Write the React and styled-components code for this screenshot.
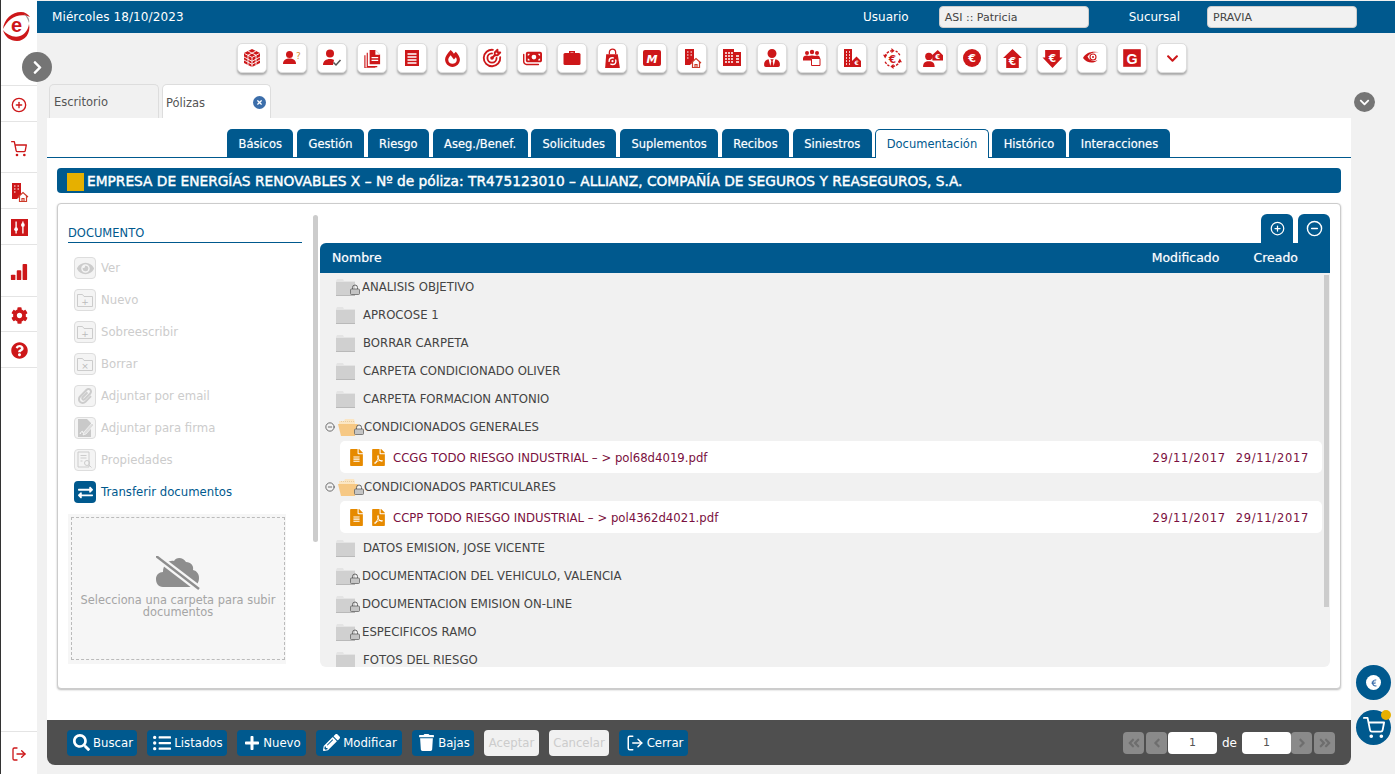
import styled, { createGlobalStyle } from 'styled-components'
import {
  FaFireAlt, FaUserTie, FaSearch, FaListUl, FaPlus, FaPencilAlt, FaTrash, FaCog, FaQuestionCircle,
  FaEuroSign, FaChevronDown, FaChevronRight, FaAngleDoubleLeft, FaAngleDoubleRight, FaAngleLeft, FaAngleRight,
  FaExchangeAlt, FaEye, FaPaperclip, FaFileAlt, FaFilePdf, FaTimes,
} from 'react-icons/fa'
import { FaMoneyBills } from 'react-icons/fa6'
import { TbTargetArrow } from 'react-icons/tb'
import { FiPlusCircle, FiMinusCircle, FiShoppingCart, FiLogOut } from 'react-icons/fi'

const BLUE = '#00598e'
const RED = '#cd1719'

const GlobalStyle = createGlobalStyle`
  html, body { margin: 0; height: 100%; overflow: hidden; }
  body { background: #f1f1f1; font-family: "DejaVu Sans", "Liberation Sans", sans-serif; font-size: 12px; color: #444; }
  * { box-sizing: border-box; }
`

/* ---- iconos dibujados a mano ---- */
const Svg = ({ size = 20, children }) => (
  <svg width={size} height={size} viewBox="0 0 20 20" fill="currentColor">{children}</svg>
)
const CubeIcon = () => (
  <Svg size={20}>
    <path d="M10 1l8 4v10l-8 4-8-4V5z" />
    <path d="M2.500 5.500L10 9.400l7.500-3.900M10 9.400V19M2 9l8 4.300L18 9M2 12l8 4.300 8-4.300M6 3l8 4.200M14 3L6 7.200M6 7.200V17M14 7.200V17" stroke="#fff" strokeWidth="0.900" fill="none" />
  </Svg>
)
const PersonAskIcon = () => (
  <Svg size={20}>
    <circle cx="7.500" cy="6.500" r="3.500" />
    <path d="M1 16c0-4 3-5.500 6.500-5.500S14 12 14 16z" />
    <text x="14" y="11" fontSize="9" fontFamily="DejaVu Sans" fill="#d8912a">?</text>
  </Svg>
)
const PersonCheckIcon = () => (
  <Svg size={20}>
    <circle cx="8" cy="5.500" r="4" />
    <path d="M1 17c0-4 3-6 7-6 1.500 0 3 .3 4 1l-1 5z" />
    <path d="M11.500 14.500l2.500 2.500 4.500-5" stroke="#555" strokeWidth="1.500" fill="none" />
  </Svg>
)
const DocsIcon = () => (
  <Svg size={19}>
    <path d="M7 1h6l5 5v10H7z" />
    <path d="M13 1v5h5" fill="#fff" />
    <path d="M9 9h7M9 12h7" stroke="#fff" strokeWidth="1.400" />
    <path d="M4.500 4v14.500H15M2 6.500V20h11" stroke="currentColor" strokeWidth="1.200" fill="none" />
  </Svg>
)
const ReceiptIcon = () => (
  <Svg size={20}>
    <path d="M3 2h14v16H3z" />
    <path d="M5.500 6h9M5.500 9h9M5.500 12h9M5.500 15h9" stroke="#fff" strokeWidth="1.500" />
  </Svg>
)
const CaseIcon = () => (
  <Svg size={20}>
    <path d="M7 5V3h6v2h-1.500V4.500h-3V5z" />
    <rect x="1.500" y="5" width="17" height="12" rx="1.500" />
  </Svg>
)
const BagIcon = () => (
  <Svg size={21}>
    <path d="M7 6V4a3 3 0 0 1 6 0v2" stroke="currentColor" strokeWidth="1.200" fill="none" />
    <path d="M4 6h11l2 13H3z" />
    <circle cx="10" cy="12.500" r="3.200" fill="none" stroke="#fff" strokeWidth="1.300" strokeDasharray="7 2" />
    <circle cx="10" cy="12.500" r="1" fill="#fff" />
  </Svg>
)
const MLogoIcon = () => (
  <Svg size={20}>
    <rect x="1" y="2" width="18" height="16" rx="2" />
    <text x="10" y="15" fontSize="11" fontWeight="700" fontStyle="italic" textAnchor="middle" fontFamily="DejaVu Sans" fill="#fff">M</text>
  </Svg>
)
const BuildingHomeIcon = () => (
  <Svg size={20}>
    <path d="M3 1h9v12l-4 4H3z" />
    <path d="M5 4h1.500M8.500 4H10M5 7h1.500M8.500 7H10M5 10h1.500" stroke="#fff" strokeWidth="1.200" />
    <path d="M9 15l5-4.500 5 4.500M10.500 14v5.500h7V14M13 19.500v-3h2v3" stroke="#cd3b2a" strokeWidth="1.200" fill="#fff" />
  </Svg>
)
const BuildingIcon = () => (
  <Svg size={20}>
    <path d="M1 1h11v3h7v14H1z" />
    <path d="M3 5h2M6 5h2M9 5h2M3 8h2M6 8h2M9 8h2M3 11h2M6 11h2M9 11h2M3 14h2M6 14h2M9 14h2M14 8h3M14 11h3M14 14h3" stroke="#fff" strokeWidth="1.500" />
  </Svg>
)
const GroupBoxIcon = () => (
  <Svg size={20}>
    <circle cx="5" cy="5" r="2" /><circle cx="10" cy="4" r="2.200" /><circle cx="15" cy="5" r="2" />
    <path d="M1 11c0-3 2-3.500 4-3.500 1 0 1.500.2 2 .5 1-.7 5-.7 6 0 .5-.3 1-.5 2-.5 2 0 3 1 3 3H9v2H1z" />
    <path d="M9.500 10.500h8.500v7H9.500z" fill="#fff" stroke="currentColor" strokeWidth="1" />
  </Svg>
)
const BuildingEuroIcon = () => (
  <Svg size={20}>
    <path d="M2 1h8v18H2z" />
    <path d="M4 4h1M7 4h1M4 7h1M7 7h1M4 10h1M7 10h1M4 13h1M7 13h1M4 16h1M7 16h1" stroke="#fff" strokeWidth="1.500" />
    <path d="M10 13l4.500-4.500L19 13v6h-9z" />
    <text x="14.500" y="17" fontSize="6" fontWeight="700" textAnchor="middle" fontFamily="DejaVu Sans" fill="#fff">€</text>
  </Svg>
)
const EuroCycleIcon = () => (
  <Svg size={21}>
    <path d="M10 2.500A7.500 7.500 0 0 0 3 8M17 7a7.500 7.500 0 0 0-4-4M10 17.500a7.500 7.500 0 0 0 7-5.500M3 13a7.500 7.500 0 0 0 4 4" stroke="currentColor" strokeWidth="1.300" fill="none" strokeDasharray="2.500 1" />
    <path d="M9 0l3 2.500L9 5zM1 6.500h4L3 10zM11 20l-3-2.500 3-2.500zM19 13.500h-4l2-3.500z" />
    <text x="10" y="14" fontSize="10" fontWeight="700" textAnchor="middle" fontFamily="DejaVu Sans" fill="currentColor">€</text>
  </Svg>
)
const AgentEuroIcon = () => (
  <Svg size={21}>
    <circle cx="6.500" cy="8" r="3.500" />
    <path d="M1 18c0-4 2-5.500 5.500-5.500S12 14 12 18z" />
    <path d="M9.500 7l5.500-5 5 5v5h-10z" />
    <text x="15" y="10.500" fontSize="6.500" fontWeight="700" textAnchor="middle" fontFamily="DejaVu Sans" fill="#fff">€</text>
  </Svg>
)
const EuroCircleIcon = () => (
  <Svg size={20}>
    <circle cx="10" cy="10" r="9" />
    <text x="10" y="14" fontSize="11" fontWeight="700" textAnchor="middle" fontFamily="DejaVu Sans" fill="#fff">€</text>
  </Svg>
)
const ArrowUpEuroIcon = () => (
  <Svg size={21}>
    <path d="M10 1l9 8.500h-3V19H4V9.500H1z" />
    <text x="10" y="16" fontSize="10" fontWeight="700" textAnchor="middle" fontFamily="DejaVu Sans" fill="#fff">€</text>
  </Svg>
)
const ArrowDownEuroIcon = () => (
  <Svg size={21}>
    <path d="M3 2h14v7h2.500L10 19 .5 9H3z" />
    <text x="10" y="13" fontSize="10" fontWeight="700" textAnchor="middle" fontFamily="DejaVu Sans" fill="#fff">€</text>
  </Svg>
)
const EyeSwirlIcon = () => (
  <Svg size={20}>
    <path d="M1 10c3-6 10-7.500 17-5.500-5-1-10 0-12.500 4 1.500 4 6 5.500 10 3.500-3.500 4-10.500 3.500-14.500-2z" />
    <circle cx="11" cy="9" r="3" fill="none" stroke="currentColor" strokeWidth="1.100" />
    <circle cx="11" cy="9" r="1" />
  </Svg>
)
const GLogoIcon = () => (
  <Svg size={22}>
    <rect x="2" y="2" width="16" height="16" />
    <text x="10" y="15" fontSize="13" fontWeight="700" textAnchor="middle" fontFamily="Liberation Sans" fill="#fff">G</text>
  </Svg>
)
const Logo = () => (
  <svg width="30" height="30" viewBox="0 0 30 30">
    <path d="M1 18C2 8 10 1 19 1c4 0 7 2 9 5-6-3-14-2-19 2-4 3-6 6-8 10z" fill={RED} />
    <path d="M1 19c4 5 11 8 17 6 5-2 8-6 9-12 2 9-4 17-12 17C8 30 3 26 1 19z" fill={RED} />
    <path d="M22 3c4 2 6 5 5 9-1-3-2-6-5-9z" fill="#999" />
    <text x="14.500" y="21" fontSize="20" fontWeight="700" textAnchor="middle" fontFamily="Liberation Sans" fill={RED}>e</text>
  </svg>
)
const SlidersIcon = () => (
  <Svg size={17}>
    <rect width="20" height="20" />
    <path d="M6 3v14M14 3v14" stroke="#fff" strokeWidth="1.600" />
    <circle cx="6" cy="12" r="2.200" fill="#fff" /><circle cx="14" cy="7" r="2.200" fill="#fff" />
  </Svg>
)
const BarsIcon = () => (
  <Svg size={18}>
    <rect x="1" y="13" width="5" height="6" rx="1" /><rect x="7.500" y="8" width="5" height="11" rx="1" /><rect x="14" y="1" width="5" height="18" rx="1" />
  </Svg>
)
const FolderPlusIcon = ({ mark = '+' }) => (
  <svg width="16" height="14" viewBox="0 0 16 14" fill="none" stroke="#ccc">
    <path d="M.5 1.500h5l1.500 2h8.500v10H.5z" />
    <text x="8" y="12" fontSize="9" textAnchor="middle" fontFamily="DejaVu Sans" fill="#bbb" stroke="none">{mark}</text>
  </svg>
)
const SignIcon = () => (
  <Svg size={20}>
    <path d="M3 1h9l4 4v14H3z" fill="#c9c9c9" />
    <path d="M9 14l8-9 2 2-8 9-3 1z" fill="#ddd" stroke="#fff" strokeWidth=".6" />
    <path d="M5 16c2-4 3-3 3-1" stroke="#fff" fill="none" />
  </Svg>
)
const PropsIcon = () => (
  <svg width="16" height="18" viewBox="0 0 16 18" fill="none" stroke="#ccc">
    <path d="M1 1h11v15H1zM3.500 4.500h6M3.500 7h6M3.500 10h2" />
    <circle cx="10" cy="12" r="2.500" /><path d="M12 14l2.500 2.500" />
  </svg>
)
const CloudOffIcon = () => (
  <svg width="44" height="34" viewBox="0 0 44 34">
    <path d="M7 31C2 31 0 27 0 23c0-4 3-7 7-7 0-7 5-12 11-11 2-4 9-4 12 1 5 0 8 4 7 8 4 1 6 4 6 8 0 5-3 9-7 9z" fill="#8e8e8e" />
    <path d="M0 0l43 33" stroke="#f6f6f6" strokeWidth="7" />
    <path d="M0 0l43 33" stroke="#8e8e8e" strokeWidth="2.500" />
  </svg>
)
const FolderIcon = ({ open, locked }) => (
  <FolderBox $open={open}>
    {open ? (
      <svg width="21" height="18" viewBox="0 0 21 18">
        <path d="M1 3h5l1-2h9l1 3v3H1z" fill="#fbe6c4" />
        <path d="M3 3.500h13" stroke="#d8b98a" strokeWidth=".6" strokeDasharray="1 1" />
        <path d="M0 6h20l-3 12H3z" fill="#f6c884" />
      </svg>
    ) : (
      <svg width="19" height="17" viewBox="0 0 19 17">
        <path d="M0 2l1-2h6l1 2h11v15H0z" fill="#e4e4e4" />
        <path d="M0 3h19v14H0z" fill="#d0d0d0" />
        <path d="M0 16h19v1H0z" fill="#b9b9b9" />
      </svg>
    )}
    {locked && (
      <LockBadge viewBox="0 0 10 11" width="10" height="11">
        <path d="M2.500 5V3.500a2.500 2.500 0 0 1 5 0V5" fill="none" stroke="#666" strokeWidth="1" />
        <rect x=".5" y="5" width="9" height="5.500" rx="1" fill="#c4c4c4" stroke="#666" strokeWidth=".8" />
      </LockBadge>
    )}
  </FolderBox>
)

/* ---- datos ---- */
const toolbarIcons = [
  <CubeIcon />, <PersonAskIcon />, <PersonCheckIcon />, <DocsIcon />, <ReceiptIcon />, <FaFireAlt size={17} />,
  <TbTargetArrow size={22} />, <FaMoneyBills size={19} />, <CaseIcon />, <BagIcon />, <MLogoIcon />,
  <BuildingHomeIcon />, <BuildingIcon />, <FaUserTie size={18} />, <GroupBoxIcon />, <BuildingEuroIcon />, <EuroCycleIcon />,
  <AgentEuroIcon />, <EuroCircleIcon />, <ArrowUpEuroIcon />, <ArrowDownEuroIcon />, <EyeSwirlIcon />, <GLogoIcon />,
  <FaChevronDown size={13} />,
]
const subTabs = ['Básicos', 'Gestión', 'Riesgo', 'Aseg./Benef.', 'Solicitudes', 'Suplementos', 'Recibos', 'Siniestros', 'Documentación', 'Histórico', 'Interacciones']
const actions = [
  { label: 'Ver', icon: <FaEye size={17} color="#ccc" /> },
  { label: 'Nuevo', icon: <FolderPlusIcon /> },
  { label: 'Sobreescribir', icon: <FolderPlusIcon /> },
  { label: 'Borrar', icon: <FolderPlusIcon mark="×" /> },
  { label: 'Adjuntar por email', icon: <FaPaperclip size={16} color="#ccc" /> },
  { label: 'Adjuntar para firma', icon: <SignIcon /> },
  { label: 'Propiedades', icon: <PropsIcon /> },
]
const tree = [
  { name: 'ANALISIS OBJETIVO', locked: true },
  { name: 'APROCOSE 1' },
  { name: 'BORRAR CARPETA' },
  { name: 'CARPETA CONDICIONADO OLIVER' },
  { name: 'CARPETA FORMACION ANTONIO' },
  { name: 'CONDICIONADOS GENERALES', locked: true, open: true, file: 'CCGG TODO RIESGO INDUSTRIAL – > pol68d4019.pdf' },
  { name: 'CONDICIONADOS PARTICULARES', locked: true, open: true, file: 'CCPP TODO RIESGO INDUSTRIAL – > pol4362d4021.pdf', gap: 1 },
  { name: 'DATOS EMISION, JOSE VICENTE' },
  { name: 'DOCUMENTACION DEL VEHICULO, VALENCIA', locked: true },
  { name: 'DOCUMENTACION EMISION ON-LINE', locked: true },
  { name: 'ESPECIFICOS RAMO', locked: true },
  { name: 'FOTOS DEL RIESGO' },
]
const barButtons = [
  { label: 'Buscar', icon: <FaSearch size={17} />, width: 70 },
  { label: 'Listados', icon: <FaListUl size={18} />, width: 80 },
  { label: 'Nuevo', icon: <FaPlus size={16} />, width: 69 },
  { label: 'Modificar', icon: <FaPencilAlt size={17} />, width: 86 },
  { label: 'Bajas', icon: <FaTrash size={17} />, width: 62 },
  { label: 'Aceptar', disabled: true, width: 55 },
  { label: 'Cancelar', disabled: true, width: 60 },
  { label: 'Cerrar', icon: <FiLogOut size={18} />, width: 69 },
]

export default function App() {
  return (
    <Shell>
      <GlobalStyle />
      <Sidebar>
        <LogoCell><Logo /></LogoCell>
        <SideItem $h={36}><FiPlusCircle size={16} color={RED} /></SideItem>
        <SideItem $h={51} $pt={4}><FiShoppingCart size={16} color={RED} /></SideItem>
        <SideItem $h={36}><BuildingHomeIcon /></SideItem>
        <SideItem $h={36}><SlidersIcon /></SideItem>
        <SideItem $h={52}><BarsIcon /></SideItem>
        <SideItem $h={35}><FaCog size={17} /></SideItem>
        <SideItem $h={36}><FaQuestionCircle size={17} /></SideItem>
        <SideFoot><FiLogOut size={16} /></SideFoot>
      </Sidebar>
      <ExpandButton><FaChevronRight size={15} /></ExpandButton>

      <Content>
        <Header>
          <DateText>Miércoles 18/10/2023</DateText>
          <HeaderLabel $mr={30}>Usuario</HeaderLabel>
          <HeaderField $mr={40}>ASI :: Patricia</HeaderField>
          <HeaderLabel $mr={27}>Sucursal</HeaderLabel>
          <HeaderField $mr={38}>PRAVIA</HeaderField>
        </Header>

        <Toolbar>
          {toolbarIcons.map((icon, i) => <ToolButton key={i}>{icon}</ToolButton>)}
        </Toolbar>

        <TabRow>
          <PageTab>Escritorio</PageTab>
          <PageTab $active>Pólizas<CloseDot><FaTimes size={7} /></CloseDot></PageTab>
          <CollapseDot><FaChevronDown size={11} /></CollapseDot>
        </TabRow>

        <Panel>
          <SubTabs>
            {subTabs.map((t) => <SubTab key={t} $active={t === 'Documentación'}>{t}</SubTab>)}
          </SubTabs>

          <TitleBar>
            <TitleMark />
            EMPRESA DE ENERGÍAS RENOVABLES X – Nº de póliza: TR475123010 – ALLIANZ, COMPAÑÍA DE SEGUROS Y REASEGUROS, S.A.
          </TitleBar>

          <Box>
            <LeftCol>
              <SectionTitle>DOCUMENTO</SectionTitle>
              <ActionList>
                {actions.map((a) => (
                  <Action key={a.label}>
                    <ActionIcon>{a.icon}</ActionIcon>
                    {a.label}
                  </Action>
                ))}
                <Action $on>
                  <ActionIcon $on><FaExchangeAlt size={15} /></ActionIcon>
                  Transferir documentos
                </Action>
              </ActionList>
              <DropOuter>
                <DropZone>
                  <CloudOffIcon />
                  <DropText>Selecciona una carpeta para subir documentos</DropText>
                </DropZone>
              </DropOuter>
              <ThumbLeft />
            </LeftCol>

            <RightCol>
              <ExpandTabs>
                <ExpandTab><FiPlusCircle size={15} /></ExpandTab>
                <ExpandTab><FiMinusCircle size={17} /></ExpandTab>
              </ExpandTabs>
              <TableHead>
                <span>Nombre</span>
                <HeadModified>Modificado</HeadModified>
                <HeadCreated>Creado</HeadCreated>
              </TableHead>
              <TreeList>
                {tree.map((n) => (
                  <div key={n.name}>
                    <FolderRow $open={n.open}>
                      {n.open && <Toggle><FiMinusCircle size={10} /></Toggle>}
                      <FolderIcon open={n.open} locked={n.locked} />
                      <FolderName $locked={n.locked} $open={n.open}>{n.name}</FolderName>
                    </FolderRow>
                    {n.file && (
                      <FileRow $gap={n.gap}>
                        <FaFileAlt size={17} color="#e68a00" />
                        <PdfIcon><FaFilePdf size={17} color="#e68a00" /></PdfIcon>
                        <FileName>{n.file}</FileName>
                        <FileDate>29/11/2017</FileDate>
                        <FileDate>29/11/2017</FileDate>
                      </FileRow>
                    )}
                  </div>
                ))}
                <ThumbRight />
              </TreeList>
            </RightCol>
          </Box>
        </Panel>

        <BottomBar>
          {barButtons.map((b) => (
            <BarButton key={b.label} $w={b.width} $disabled={b.disabled}>{b.icon}{b.label}</BarButton>
          ))}
          <Pager>
            <PageArrow $mr={2}><FaAngleDoubleLeft size={14} /></PageArrow>
            <PageArrow><FaAngleLeft size={14} /></PageArrow>
            <PageInput>1</PageInput>
            <PageOf>de</PageOf>
            <PageInput>1</PageInput>
            <PageArrow $mr={2}><FaAngleRight size={14} /></PageArrow>
            <PageArrow><FaAngleDoubleRight size={14} /></PageArrow>
          </Pager>
        </BottomBar>
      </Content>

      <FloatButton $top={665}><EuroDot><FaEuroSign size={8} /></EuroDot></FloatButton>
      <FloatButton $top={710}>
        <FiShoppingCart size={22} />
        <Badge />
      </FloatButton>
    </Shell>
  )
}

const Shell = styled.div`
  position: relative;
  display: flex;
  width: 1395px;
  height: 774px;
  overflow: hidden;
`
const Sidebar = styled.aside`
  width: 37px;
  flex: none;
  background: #fff;
  border-left: 1px solid #333;
  display: flex;
  flex-direction: column;
  color: ${RED};
`
const LogoCell = styled.div`
  height: 86px;
  padding: 11px 0 0 1px;
  border-bottom: 1px solid #e4e4e4;
`
const SideItem = styled.div`
  height: ${(p) => p.$h}px;
  padding-top: ${(p) => p.$pt || 2}px;
  display: flex;
  align-items: center;
  justify-content: center;
  border-bottom: 1px solid #e4e4e4;
`
const SideFoot = styled.div`
  margin-top: auto;
  height: 43px;
  padding-top: 2px;
  border-top: 1px solid #e4e4e4;
  display: flex;
  align-items: center;
  justify-content: center;
`
const ExpandButton = styled.div`
  position: absolute;
  left: 22px;
  top: 52px;
  width: 30px;
  height: 30px;
  border-radius: 50%;
  background: #757575;
  color: #fff;
  display: flex;
  align-items: center;
  justify-content: center;
`
const Content = styled.main`
  flex: 1;
  min-width: 0;
  padding-top: 1px;
  display: flex;
  flex-direction: column;
`
const Header = styled.header`
  height: 32px;
  flex: none;
  padding-bottom: 1px;
  background: ${BLUE};
  color: #fff;
  display: flex;
  align-items: center;
  font-size: 12px;
`
const DateText = styled.div`
  margin-left: 15px;
  margin-right: auto;
  letter-spacing: 0.1px;
`
const HeaderLabel = styled.div`
  margin-right: ${(p) => p.$mr}px;
`
const HeaderField = styled.div`
  width: 150px;
  height: 22px;
  margin-right: ${(p) => p.$mr}px;
  padding-left: 5px;
  line-height: 21px;
  font-size: 11px;
  background: #f1f1f1;
  border: 1px solid #ccc;
  border-radius: 4px;
  color: #444;
`
const Toolbar = styled.nav`
  height: 51px;
  flex: none;
  padding: 10px 0 0 200px;
  display: flex;
  gap: 10px;
`
const ToolButton = styled.button`
  width: 30px;
  height: 30px;
  padding: 0;
  background: #fff;
  border: 1px solid #ddd;
  border-radius: 5px;
  box-shadow: 0 2px 2px #aaa;
  color: ${RED};
  display: flex;
  align-items: center;
  justify-content: center;
`
const TabRow = styled.div`
  height: 34px;
  flex: none;
  padding-left: 12px;
  display: flex;
  gap: 3px;
  align-items: flex-end;
`
const PageTab = styled.div`
  width: ${(p) => (p.$active ? 109 : 110)}px;
  height: 34px;
  padding: ${(p) => (p.$active ? '11px' : '10px')} 4px 0 ${(p) => (p.$active ? 3 : 4)}px;
  font-size: 11.500px;
  background: ${(p) => (p.$active ? '#fff' : '#f1f1f1')};
  border: 1px solid #ddd;
  border-bottom: 0;
  border-radius: 5px 5px 0 0;
  display: flex;
  justify-content: space-between;
  color: #555;
`
const CloseDot = styled.span`
  width: 13px;
  height: 13px;
  border-radius: 50%;
  background: #3c6eaa;
  color: #fff;
  display: flex;
  align-items: center;
  justify-content: center;
`
const CollapseDot = styled.div`
  width: 21px;
  height: 20px;
  margin: 0 20px 6px auto;
  border-radius: 50%;
  background: #757575;
  color: #fff;
  display: flex;
  align-items: center;
  justify-content: center;
`
const Panel = styled.section`
  width: 1304px;
  height: 602px;
  flex: none;
  margin-left: 10px;
  padding-top: 11px;
  background: #fff;
`
const SubTabs = styled.div`
  height: 29px;
  padding-left: 180px;
  display: flex;
  gap: 3.500px;
  border-bottom: 1px solid ${BLUE};
`
const SubTab = styled.div`
  height: 28px;
  padding: 0 11.500px;
  line-height: 30px;
  font-size: 11.500px;
  border-radius: 5px 5px 0 0;
  background: ${BLUE};
  color: #fff;
  text-shadow: 0 0 1px rgba(255, 255, 255, 0.5);
  ${(p) => p.$active && `
    height: 29px;
    padding: 0 10.500px;
    position: relative;
    z-index: 1;
    line-height: 28px;
    background: #fff;
    color: ${BLUE};
    text-shadow: none;
    border: 1px solid ${BLUE};
    border-bottom: 0;
  `}
`
const TitleBar = styled.h1`
  height: 25px;
  margin: 10px 10px 10px;
  padding-left: 10px;
  display: flex;
  align-items: center;
  gap: 3px;
  background: ${BLUE};
  color: #fff;
  border-radius: 4px;
  font-size: 13.760px;
  font-weight: 400;
  -webkit-text-stroke: 0.4px #fff;
  white-space: nowrap;
`
const TitleMark = styled.span`
  width: 17px;
  height: 18px;
  margin-top: 3px;
  background: #e6b000;
`
const Box = styled.div`
  height: 486px;
  margin: 0 10px;
  padding: 10px 10px 0 10px;
  background: #fff;
  border: 1px solid #ccc;
  border-radius: 4px;
  box-shadow: 0 1px 2px #bbb;
  display: flex;
  gap: 18px;
`
const LeftCol = styled.div`
  position: relative;
  width: 234px;
  flex: none;
  padding-top: 12px;
`
const SectionTitle = styled.div`
  height: 17px;
  color: ${BLUE};
  font-size: 11.500px;
  border-bottom: 1px solid ${BLUE};
`
const ActionList = styled.div`
  padding: 14px 0 0 6px;
  display: flex;
  flex-direction: column;
  gap: 10px;
`
const Action = styled.div`
  display: flex;
  align-items: center;
  gap: 5px;
  height: 22px;
  font-size: 11.700px;
  color: ${(p) => (p.$on ? BLUE : '#ccc')};
`
const ActionIcon = styled.span`
  width: 22px;
  height: 22px;
  display: flex;
  align-items: center;
  justify-content: center;
  border-radius: 4px;
  border: ${(p) => (p.$on ? '0' : '1px solid #ddd')};
  background: ${(p) => (p.$on ? BLUE : '#f4f4f4')};
  color: #fff;
`
const DropOuter = styled.div`
  width: 218px;
  height: 150px;
  margin-top: 11px;
  padding: 3px 1px 4px 3px;
  background: #f6f6f6;
`
const DropZone = styled.div`
  height: 100%;
  padding-top: 38px;
  border: 1px dashed #bbb;
  display: flex;
  flex-direction: column;
  align-items: center;
`
const DropText = styled.div`
  margin-top: 4px;
  width: 205px;
  text-align: center;
  line-height: 12px;
  font-size: 11.400px;
  color: #a5a5a5;
`
const ThumbLeft = styled.div`
  position: absolute;
  left: 245px;
  top: 1px;
  width: 5px;
  height: 327px;
  border-radius: 3px;
  background: #ccc;
`
const RightCol = styled.div`
  flex: 1;
  min-width: 0;
`
const ExpandTabs = styled.div`
  height: 29px;
  display: flex;
  justify-content: flex-end;
  gap: 5px;
`
const ExpandTab = styled.div`
  width: 32px;
  height: 29px;
  border-radius: 6px 6px 0 0;
  background: ${BLUE};
  color: #fff;
  display: flex;
  align-items: center;
  justify-content: center;
`
const TableHead = styled.div`
  height: 30px;
  padding-left: 12px;
  padding-bottom: 1px;
  background: ${BLUE};
  color: #fff;
  border-radius: 6px 0 0 0;
  display: flex;
  align-items: center;
  font-size: 12.500px;
  text-shadow: 0 0 1px rgba(255, 255, 255, 0.5);
`
const HeadModified = styled.span`
  margin-left: auto;
`
const HeadCreated = styled.span`
  margin: 0 32px 0 34px;
`
const TreeList = styled.div`
  position: relative;
  height: 394px;
  overflow: hidden;
  background: #f1f1f1;
  border-radius: 0 0 6px 6px;
`
const ThumbRight = styled.div`
  position: absolute;
  right: 1px;
  top: 2px;
  width: 5px;
  height: 332px;
  background: #ccc;
`
const FolderRow = styled.div`
  height: 28px;
  padding-left: ${(p) => (p.$open ? 5 : 16)}px;
  display: flex;
  align-items: center;
  font-size: 11.700px;
  color: #444;
`
const Toggle = styled.span`
  width: 13px;
  display: flex;
  color: #555;
`
const FolderBox = styled.span`
  position: relative;
  width: ${(p) => (p.$open ? 21 : 19)}px;
  flex: none;
  display: flex;
`
const LockBadge = styled.svg`
  position: absolute;
  right: -5px;
  bottom: 1px;
`
const FolderName = styled.span`
  margin-left: ${(p) => (p.$open ? 5 : p.$locked ? 7 : 8)}px;
`
const FileRow = styled.div`
  height: 32px;
  margin: 0 8px ${(p) => p.$gap || 0}px 20px;
  padding: 1px 13px 0 8px;
  background: #fff;
  border-radius: 5px;
  display: flex;
  align-items: center;
  font-size: 11.700px;
  color: #7a1040;
`
const PdfIcon = styled.span`
  display: flex;
  margin: 0 6px 0 5px;
`
const FileName = styled.span`
  margin-right: auto;
`
const FileDate = styled.span`
  margin-left: 10px;
  font-size: 11.500px;
  letter-spacing: 0.7px;
`
const BottomBar = styled.footer`
  width: 1304px;
  height: 45px;
  flex: none;
  margin-left: 10px;
  padding: 0 15px 0 20px;
  background: #4f4f4f;
  border-radius: 0 0 8px 8px;
  display: flex;
  align-items: center;
  gap: 10px;
`
const BarButton = styled.button`
  width: ${(p) => p.$w}px;
  height: 26px;
  padding: 0 0 0 ${(p) => (p.$disabled ? 0 : 2)}px;
  display: flex;
  align-items: center;
  justify-content: center;
  gap: 3px;
  border: 0;
  border-radius: 4px;
  font: 11.700px "DejaVu Sans", sans-serif;
  background: ${(p) => (p.$disabled ? '#f1f1f1' : BLUE)};
  color: ${(p) => (p.$disabled ? '#ccc' : '#fff')};
`
const Pager = styled.div`
  margin-left: auto;
  display: flex;
  align-items: center;
`
const PageArrow = styled.div`
  width: 21px;
  height: 22px;
  margin-right: ${(p) => p.$mr || 1}px;
  border-radius: 4px;
  background: #8a8a8a;
  color: #6e6e6e;
  display: flex;
  align-items: center;
  justify-content: center;
`
const PageInput = styled.div`
  width: 49px;
  height: 22px;
  line-height: 22px;
  text-align: center;
  font-size: 11px;
  background: #fff;
  border-radius: 4px;
  color: #555;
`
const PageOf = styled.span`
  width: 25px;
  text-align: center;
  color: #fff;
  font-size: 12px;
`
const FloatButton = styled.div`
  position: absolute;
  left: 1356px;
  top: ${(p) => p.$top}px;
  width: 35px;
  height: 35px;
  border-radius: 50%;
  background: ${BLUE};
  color: #fff;
  display: flex;
  align-items: center;
  justify-content: center;
`
const EuroDot = styled.span`
  width: 15px;
  height: 15px;
  border-radius: 50%;
  background: #fff;
  color: #3c6eaa;
  display: flex;
  align-items: center;
  justify-content: center;
`
const Badge = styled.span`
  position: absolute;
  right: 0;
  top: 0;
  width: 10px;
  height: 10px;
  border-radius: 50%;
  background: #e6b000;
`
